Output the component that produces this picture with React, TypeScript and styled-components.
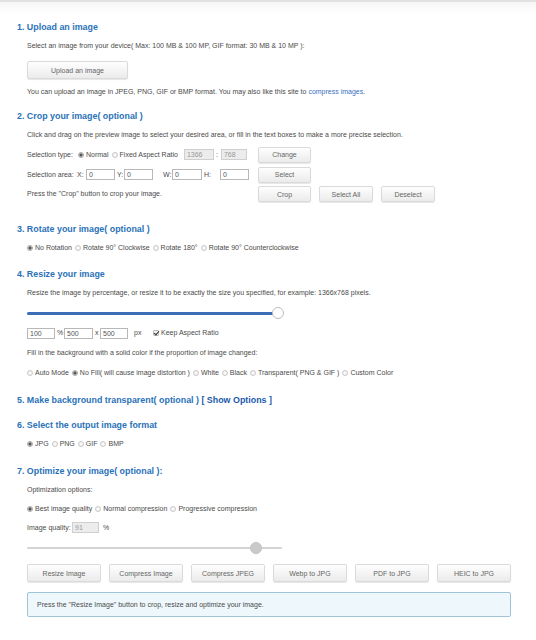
import React from 'react'
import styled, { createGlobalStyle } from 'styled-components'

const GlobalStyle = createGlobalStyle`
  html, body {
    margin: 0;
    padding: 0;
    background: #fff;
  }
  body {
    font-family: 'Liberation Sans', Arial, sans-serif;
    color: #4a4a4a;
  }
`

const Page = styled.div`
  width: 536px;
  min-height: 640px;
  box-sizing: border-box;
  border-top: 2px solid #e2e2e2;
  background: linear-gradient(#f6f6f6, #fff 12px);
  padding: 19px 25px 0 17px;
`

const Section = styled.section<{ $top?: number }>`
  margin-top: ${p => p.$top ?? 10}px;
`

const Heading = styled.h2`
  margin: 0 0 3px;
  height: 12px;
  line-height: 12px;
  font-size: 8.9px;
  font-weight: bold;
  color: #2a72b8;
  white-space: nowrap;
`

const HeadLink = styled.span`
  color: #1c59ad;
`

const Body = styled.div`
  padding-left: 10px;
  font-size: 7px;
  line-height: 10px;
`

const Row = styled.div<{ $h?: number; $top?: number }>`
  display: flex;
  align-items: center;
  height: ${p => p.$h ?? 20}px;
  margin-top: ${p => p.$top ?? 0}px;
  white-space: nowrap;
`

const Cell = styled.span<{ $w: number; $pad?: number }>`
  display: inline-block;
  flex: none;
  width: ${p => p.$w}px;
  padding-left: ${p => p.$pad ?? 0}px;
  box-sizing: border-box;
  white-space: nowrap;
`

const Link = styled.a`
  color: #3b6fc2;
  text-decoration: none;
  margin-left: 2px;
`

const Button = styled.button<{ $w: number; $h?: number }>`
  flex: none;
  width: ${p => p.$w}px;
  height: ${p => p.$h ?? 18}px;
  padding: 0;
  font-family: 'Liberation Sans', Arial, sans-serif;
  font-size: 7px;
  color: #666;
  background: linear-gradient(#fefefe, #ebebeb);
  border: 1px solid #dadada;
  border-radius: 2px;
  box-shadow: 0 1px 1px rgba(0, 0, 0, 0.1);
`

const TextInput = styled.input<{ $w: number }>`
  flex: none;
  width: ${p => p.$w}px;
  height: 11px;
  box-sizing: border-box;
  padding: 0 2px;
  border: 1px solid #b8b8b8;
  border-radius: 0;
  font-family: 'Liberation Sans', Arial, sans-serif;
  font-size: 7px;
  color: #555;
  background: #fff;
  outline: none;

  &:disabled {
    background: #ececec;
    border-color: #cfcfcf;
    color: #999;
  }
`

const RadioInput = styled.input`
  appearance: none;
  flex: none;
  width: 6px;
  height: 6px;
  margin: 0 2px 0 0;
  border: 1px solid #c9c9c9;
  border-radius: 50%;
  background: radial-gradient(circle, #fafafa 0 1px, #e4e4e4 3px);

  &:checked {
    border-color: #a9a9a9;
    background: radial-gradient(circle, #555 0 1.3px, #d6d6d6 1.8px);
  }
`

const RadioItem = styled.label`
  display: inline-flex;
  align-items: center;
  margin-right: 3px;
`

const CheckInput = styled.input`
  appearance: none;
  position: relative;
  flex: none;
  width: 6px;
  height: 6px;
  margin: 0 2px 0 0;
  border: 1px solid #bcbcbc;
  border-radius: 1px;
  background: #f2f2f2;

  &:checked::after {
    content: '';
    position: absolute;
    left: 1px;
    top: -1px;
    width: 2px;
    height: 4px;
    border: solid #333;
    border-width: 0 1.2px 1.2px 0;
    transform: rotate(40deg);
  }
`

const CropGrid = styled.div`
  display: grid;
  grid-template-columns: 231px auto;
  grid-template-rows: 19px 21px 19px 20px;
  align-items: center;
  white-space: nowrap;
`

const Wide = styled.div`
  grid-column: 1 / span 2;
`

const Inline = styled.div`
  display: flex;
  align-items: center;
`

const ButtonRow = styled.div<{ $gap: number; $top?: number }>`
  display: flex;
  gap: ${p => p.$gap}px;
  margin-top: ${p => p.$top ?? 0}px;
`

const Slider = styled.div<{ $w: number; $h?: number }>`
  display: flex;
  align-items: center;
  height: ${p => p.$h ?? 20}px;
  width: ${p => p.$w}px;
`

const Track = styled.div<{ $thick: number; $color: string }>`
  position: relative;
  flex: 1;
  height: ${p => p.$thick}px;
  background: ${p => p.$color};
  border-radius: 2px;
`

const Thumb = styled.span<{ $fill: string; $border: string }>`
  position: absolute;
  top: 50%;
  width: 12px;
  height: 12px;
  margin: -6px 0 0 -6px;
  box-sizing: border-box;
  border-radius: 50%;
  background: ${p => p.$fill};
  border: 1px solid ${p => p.$border};
`

const InfoBox = styled.div`
  display: flex;
  align-items: center;
  width: 484px;
  height: 25px;
  box-sizing: border-box;
  margin-top: 10px;
  padding-left: 9px;
  border: 1px solid #9fc4d8;
  border-radius: 2px;
  background: #eef8fc;
  font-size: 7px;
`

interface RadioProps {
  name: string
  label: string
  checked?: boolean
}

const Radio = ({ name, label, checked }: RadioProps) => (
  <RadioItem>
    <RadioInput type="radio" name={name} defaultChecked={checked} />
    {label}
  </RadioItem>
)

interface RadioListProps {
  name: string
  items: string[]
  checked: number
  h?: number
}

const RadioList = ({ name, items, checked, h }: RadioListProps) => (
  <Row $h={h}>
    {items.map((item, i) => (
      <Radio key={item} name={name} label={item} checked={i === checked} />
    ))}
  </Row>
)

const App = () => {
  return (
    <Page>
      <GlobalStyle />

      <Section $top={0}>
        <Heading>1. Upload an image</Heading>
        <Body>
          <Row>Select an image from your device( Max: 100 MB &amp; 100 MP, GIF format: 30 MB &amp; 10 MP ):</Row>
          <ButtonRow $gap={0} $top={5}>
            <Button $w={101}>Upload an image</Button>
          </ButtonRow>
          <Row $top={3}>
            You can upload an image in JPEG, PNG, GIF or BMP format. You may also like this site to
            <Link href="#">compress images</Link>.
          </Row>
        </Body>
      </Section>

      <Section $top={8}>
        <Heading>2. Crop your image( optional )</Heading>
        <Body>
          <CropGrid>
            <Wide>
              Click and drag on the preview image to select your desired area, or fill in the text boxes to make a more precise selection.
            </Wide>
            <Inline>
              <Cell $w={51}>Selection type:</Cell>
              <Radio name="seltype" label="Normal" checked />
              <Radio name="seltype" label="Fixed Aspect Ratio" />
              <Cell $w={3} />
              <TextInput $w={30} defaultValue="1366" disabled />
              <Cell $w={7} $pad={2}>:</Cell>
              <TextInput $w={26} defaultValue="768" disabled />
            </Inline>
            <Button $w={53} $h={16}>Change</Button>
            <Inline>
              <Cell $w={50}>Selection area:</Cell>
              <Cell $w={9}>X:</Cell>
              <TextInput $w={29} defaultValue="0" />
              <Cell $w={9} $pad={2}>Y:</Cell>
              <TextInput $w={29} defaultValue="0" />
              <Cell $w={19} $pad={10}>W:</Cell>
              <TextInput $w={30} defaultValue="0" />
              <Cell $w={18} $pad={2}>H:</Cell>
              <TextInput $w={29} defaultValue="0" />
            </Inline>
            <Button $w={53} $h={16}>Select</Button>
            <div>Press the &quot;Crop&quot; button to crop your image.</div>
            <ButtonRow $gap={8}>
              <Button $w={53} $h={16}>Crop</Button>
              <Button $w={54} $h={16}>Select All</Button>
              <Button $w={54} $h={16}>Deselect</Button>
            </ButtonRow>
          </CropGrid>
        </Body>
      </Section>

      <Section $top={19}>
        <Heading>3. Rotate your image( optional )</Heading>
        <Body>
          <RadioList
            name="rotate"
            checked={0}
            items={['No Rotation', 'Rotate 90° Clockwise', 'Rotate 180°', 'Rotate 90° Counterclockwise']}
          />
        </Body>
      </Section>

      <Section>
        <Heading>4. Resize your image</Heading>
        <Body>
          <Row>Resize the image by percentage, or resize it to be exactly the size you specified, for example: 1366x768 pixels.</Row>
          <Slider $w={251}>
            <Track $thick={3} $color="#3a6db5">
              <Thumb $fill="#fff" $border="#bdbdbd" style={{ left: '100%' }} />
            </Track>
          </Slider>
          <Row>
            <TextInput $w={28} defaultValue="100" />
            <Cell $w={9} $pad={2}>%</Cell>
            <TextInput $w={29} defaultValue="500" />
            <Cell $w={7} $pad={2}>x</Cell>
            <TextInput $w={28} defaultValue="500" />
            <Cell $w={25} $pad={6}>px</Cell>
            <RadioItem>
              <CheckInput type="checkbox" defaultChecked />
              Keep Aspect Ratio
            </RadioItem>
          </Row>
          <Row>Fill in the background with a solid color if the proportion of image changed:</Row>
          <RadioList
            name="fill"
            checked={1}
            items={['Auto Mode', 'No Fill( will cause image distortion )', 'White', 'Black', 'Transparent( PNG & GIF )', 'Custom Color']}
          />
        </Body>
      </Section>

      <Section $top={11}>
        <Heading>
          5. Make background transparent( optional ) <HeadLink>[ Show Options ]</HeadLink>
        </Heading>
      </Section>

      <Section $top={13}>
        <Heading>6. Select the output image format</Heading>
        <Body>
          <RadioList name="format" checked={0} items={['JPG', 'PNG', 'GIF', 'BMP']} />
        </Body>
      </Section>

      <Section $top={11}>
        <Heading>7. Optimize your image( optional ):</Heading>
        <Body>
          <Row $h={19}>Optimization options:</Row>
          <RadioList
            name="optimize"
            h={19}
            checked={0}
            items={['Best image quality', 'Normal compression', 'Progressive compression']}
          />
          <Row $h={19}>
            <Cell $w={45}>Image quality:</Cell>
            <TextInput $w={27} defaultValue="91" disabled />
            <Cell $w={10} $pad={4}>%</Cell>
          </Row>
          <Slider $w={255} $h={22}>
            <Track $thick={2} $color="#d4d4d4">
              <Thumb $fill="#c9c9c9" $border="#c2c2c2" style={{ left: `${(229 / 255) * 100}%` }} />
            </Track>
          </Slider>
          <ButtonRow $gap={8} $top={5}>
            {['Resize Image', 'Compress Image', 'Compress JPEG', 'Webp to JPG', 'PDF to JPG', 'HEIC to JPG'].map(b => (
              <Button key={b} $w={74}>{b}</Button>
            ))}
          </ButtonRow>
          <InfoBox>Press the &quot;Resize Image&quot; button to crop, resize and optimize your image.</InfoBox>
        </Body>
      </Section>
    </Page>
  )
}

export default App
